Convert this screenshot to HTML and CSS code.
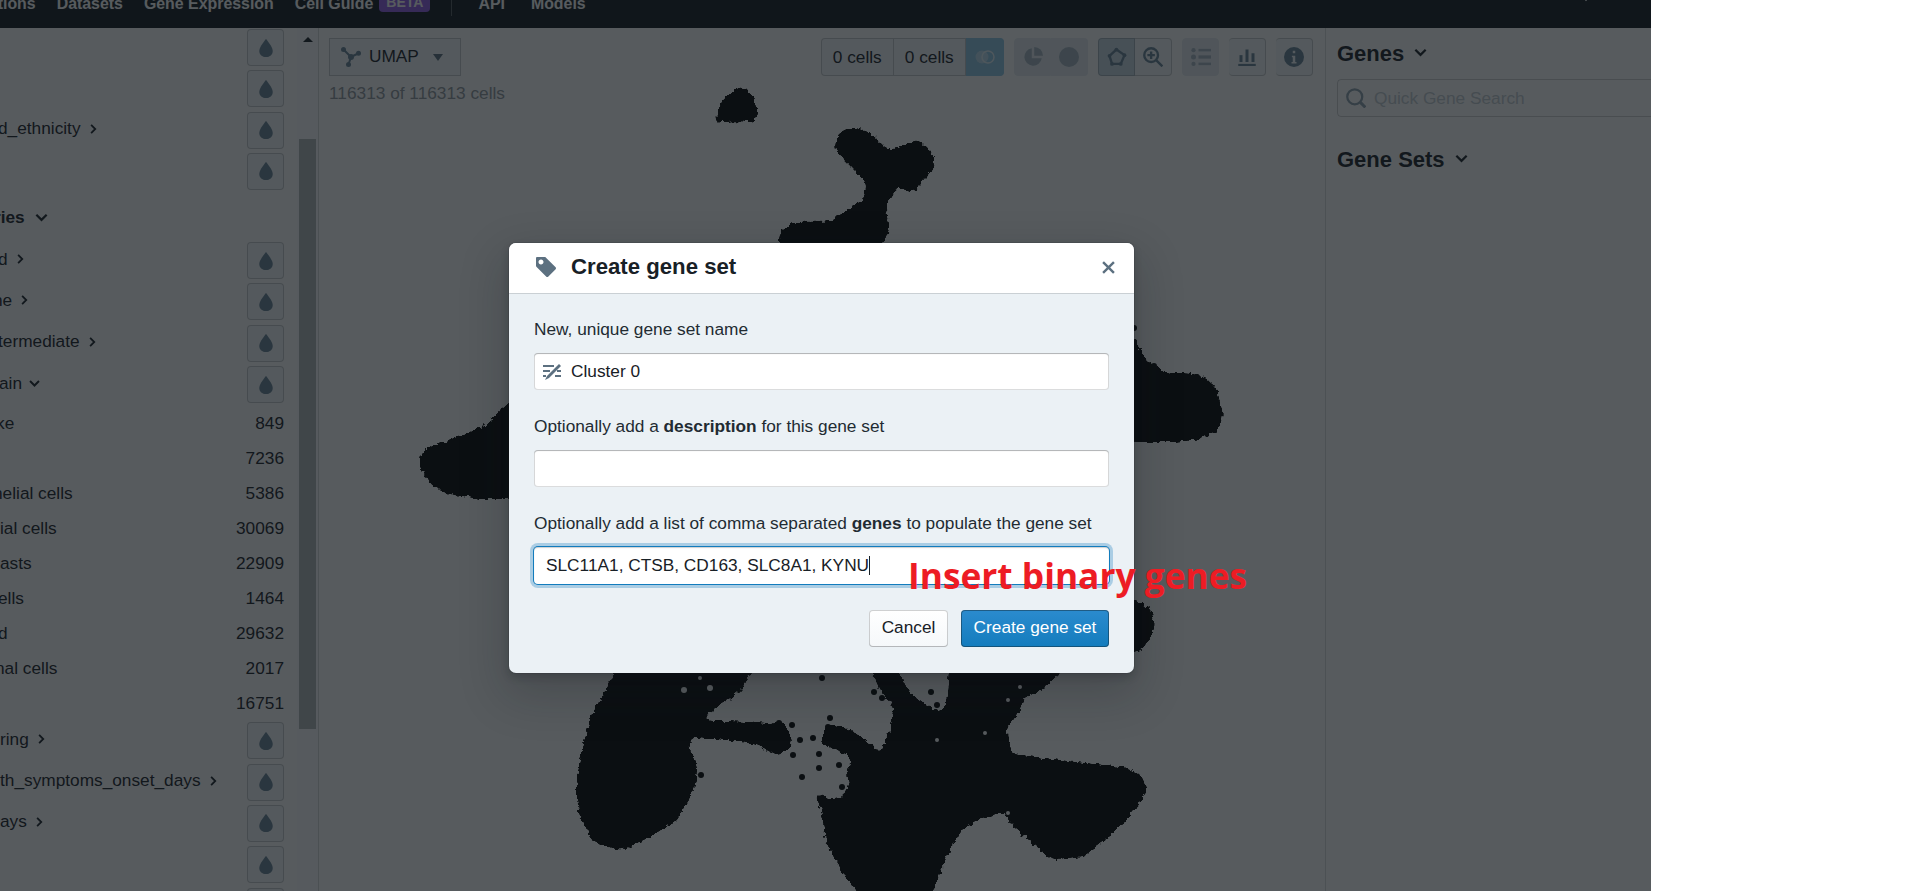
FILE: index.html
```html
<!doctype html>
<html>
<head>
  <title>cellxgene - Create gene set</title>
  <meta charset="utf-8"/>
  <link rel="stylesheet" href="styles.css">
</head>
<body>
  <svg class="Defs" width="0" height="0">
    <symbol id="i-tint" viewBox="0 0 16 16"><path d="M8 0S2 7 2 10.6C2 13.8 4.6 16 8 16s6-2.2 6-5.4C14 7 8 0 8 0z"/></symbol>
    <symbol id="i-right" viewBox="0 0 16 16"><path d="M5.5 2.5 11 8l-5.5 5.5" fill="none" stroke="currentColor" stroke-width="2.4"/></symbol>
    <symbol id="i-down" viewBox="0 0 16 16"><path d="M2.5 5 8 10.5 13.5 5" fill="none" stroke="currentColor" stroke-width="2.4"/></symbol>
  </svg>

  <div class="App">
    <nav class="Nav">
      <span class="Nav__Item Nav__Item--first">Collections</span>
      <span class="Nav__Item">Datasets</span>
      <span class="Nav__Item">Gene Expression</span>
      <span class="Nav__Item Nav__Item--tight">Cell Guide</span>
      <span class="Nav__Badge">BETA</span>
      <span class="Nav__Divider"></span>
      <span class="Nav__Item">API</span>
      <span class="Nav__Item Nav__Item--wide">Models</span>
      <svg class="Nav__Caret"><use href="#i-down"/></svg>
    </nav>

    <div class="Columns">
      <aside class="Side">
        <div class="Row"><button class="Drop"><svg><use href="#i-tint"/></svg></button></div>
        <div class="Row"><button class="Drop"><svg><use href="#i-tint"/></svg></button></div>
        <div class="Row">
          <span class="Name Cut-2">d_ethnicity</span><svg class="Chev"><use href="#i-right"/></svg>
          <button class="Drop"><svg><use href="#i-tint"/></svg></button>
        </div>
        <div class="Row"><button class="Drop"><svg><use href="#i-tint"/></svg></button></div>

        <div class="Heading"><span class="Name Cut-6">ries</span><svg class="Chev Chev--big"><use href="#i-down"/></svg></div>

        <div class="Row">
          <span class="Name Cut-2">d</span><svg class="Chev"><use href="#i-right"/></svg>
          <button class="Drop"><svg><use href="#i-tint"/></svg></button>
        </div>
        <div class="Row">
          <span class="Name Cut-7">ne</span><svg class="Chev"><use href="#i-right"/></svg>
          <button class="Drop"><svg><use href="#i-tint"/></svg></button>
        </div>
        <div class="Row">
          <span class="Name Cut-2">termediate</span><svg class="Chev"><use href="#i-right"/></svg>
          <button class="Drop"><svg><use href="#i-tint"/></svg></button>
        </div>
        <div class="Row">
          <span class="Name Cut-1">ain</span><svg class="Chev Chev--down"><use href="#i-down"/></svg>
          <button class="Drop"><svg><use href="#i-tint"/></svg></button>
        </div>

        <div class="Count"><span class="Name Cut-4">ke</span><span>849</span></div>
        <div class="Count"><span class="Name"></span><span>7236</span></div>
        <div class="Count"><span class="Name Cut-7">helial cells</span><span>5386</span></div>
        <div class="Count"><span class="Name">ial cells</span><span>30069</span></div>
        <div class="Count"><span class="Name">asts</span><span>22909</span></div>
        <div class="Count"><span class="Name Cut-2">ells</span><span>1464</span></div>
        <div class="Count"><span class="Name Cut-2">d</span><span>29632</span></div>
        <div class="Count"><span class="Name Cut-5">nal cells</span><span>2017</span></div>
        <div class="Count"><span class="Name"></span><span>16751</span></div>

        <div class="Row">
          <span class="Name">ring</span><svg class="Chev"><use href="#i-right"/></svg>
          <button class="Drop"><svg><use href="#i-tint"/></svg></button>
        </div>
        <div class="Row">
          <span class="Name">th_symptoms_onset_days</span><svg class="Chev"><use href="#i-right"/></svg>
          <button class="Drop"><svg><use href="#i-tint"/></svg></button>
        </div>
        <div class="Row">
          <span class="Name">ays</span><svg class="Chev"><use href="#i-right"/></svg>
          <button class="Drop"><svg><use href="#i-tint"/></svg></button>
        </div>
        <div class="Row"><button class="Drop"><svg><use href="#i-tint"/></svg></button></div>
        <div class="Row"><button class="Drop"><svg><use href="#i-tint"/></svg></button></div>
      </aside>

      <div class="Scroll">
        <svg class="Scroll__Arrow" viewBox="0 0 10 5"><path d="M5 0l5 5H0z"/></svg>
        <div class="Scroll__Thumb"></div>
      </div>

      <main class="Main">
        <!-- plot uses page coordinates -->
        <svg class="Plot" viewBox="319 28 1006 863">
          <defs>
            <filter id="rough" filterUnits="userSpaceOnUse" x="319" y="28" width="1006" height="900" color-interpolation-filters="sRGB">
              <feGaussianBlur stdDeviation="3.5" result="soft"/>
              <feComponentTransfer in="soft" result="solid">
                <feFuncA type="linear" slope="24" intercept="-8"/>
              </feComponentTransfer>
              <feTurbulence type="fractalNoise" baseFrequency=".2" numOctaves="2" seed="4" result="noise"/>
              <feDisplacementMap in="solid" in2="noise" scale="6" xChannelSelector="R" yChannelSelector="G"/>
            </filter>
          </defs>
          <g class="Plot__Cells">
            <path d="M737 87 744 90 750 95 755 103 756 112 753 122 745 120 730 120 717 122 718 112 724 100 730 96z"/>
            <path d="M853 128 871 135 888 152 905 147 917 140 934 157 931 170 921 180 915 191 905 188 890 187 894 194 885 200 888 230 879 250H779L782 230 796 223 830 223 845 213 865 200 868 183 853 167 836 150 838 135z"/>
            <path d="M422 452 443 443 468 435 490 423 520 395V497L483 498 450 493 433 485 421 467z"/>
            <path d="M1120 325 1134 340 1142 358 1153 367 1167 374 1190 375 1202 377 1215 388 1222 415 1218 428 1200 438 1170 441 1120 440z"/>
            <path d="M1120 598 1134 602 1150 610 1154 625 1147 643 1134 653 1120 656z"/>
            <path d="M621 660 607 690 592 717 583 750 577 787 581 817 595 842 621 849 647 837 675 820 693 790 696 767 687 747 693 733 707 713 739 690 759 660z"/>
            <path d="M693 737 704 722 744 723 773 726 782 720 792 743 779 755 756 743 721 738z"/>
            <path d="M868 660 882 690 895 707 891 733 879 757 871 745 848 730 828 726 820 742 846 752 853 760 848 773 851 787 842 798 828 800 813 792 822 807 828 845 845 873 865 900H928L945 857 960 830 980 817 1006 810 1011 823 1031 840 1052 858 1083 855 1112 833 1135 808 1146 790 1138 773 1112 767 1072 763 1011 755 1008 743 1006 727 1017 713 1023 697 1040 690 1072 660H951L948 700 942 715 920 703 908 693 891 660z"/>
          </g>
          <g class="Plot__Dots">
            <circle cx="1134" cy="328" r="3"/><circle cx="1154" cy="366" r="3"/>
            <circle cx="779" cy="723" r="3"/><circle cx="792" cy="725" r="3"/><circle cx="830" cy="718" r="3"/>
            <circle cx="828" cy="727" r="3"/><circle cx="800" cy="740" r="3"/><circle cx="813" cy="738" r="3"/>
            <circle cx="793" cy="755" r="3"/><circle cx="819" cy="754" r="3"/><circle cx="819" cy="768" r="3"/>
            <circle cx="802" cy="777" r="3"/><circle cx="701" cy="775" r="3"/><circle cx="839" cy="765" r="3"/>
            <circle cx="842" cy="787" r="3"/><circle cx="690" cy="697" r="3"/><circle cx="882" cy="698" r="3"/>
            <circle cx="874" cy="692" r="3"/><circle cx="931" cy="692" r="3"/><circle cx="822" cy="678" r="3"/>
            <circle cx="937" cy="705" r="3"/><circle cx="692" cy="681" r="3"/>
          </g>
          <g class="Plot__Holes">
            <circle cx="684" cy="690" r="3"/><circle cx="710" cy="688" r="3"/><circle cx="700" cy="678" r="2"/>
            <circle cx="985" cy="733" r="2"/><circle cx="1008" cy="700" r="2"/><circle cx="1020" cy="687" r="2"/>
            <circle cx="937" cy="740" r="2"/><circle cx="1008" cy="813" r="2"/>
          </g>
        </svg>

        <div class="Toolbar">
          <div>
            <button class="Btn Btn--umap">
              <svg class="Icon" viewBox="0 0 16 16"><path d="M2 2l6 6 6-3M8 8l-2 6" fill="none" stroke="currentColor" stroke-width="1.6"/><circle cx="2" cy="2" r="2"/><circle cx="14" cy="5" r="2"/><circle cx="6" cy="14" r="2"/><circle cx="8" cy="8" r="2.4"/></svg>
              <span class="Btn__Text">UMAP</span>
              <svg class="Caret" viewBox="0 0 10 7"><path d="M0 0h10L5 7z"/></svg>
            </button>
            <div class="Total">116313 of 116313 cells</div>
          </div>
          <div class="Tools">
            <div class="Group">
              <button class="Btn Btn--cells">0 cells</button>
              <button class="Btn Btn--cells">0 cells</button>
              <button class="Btn Btn--venn">
                <svg class="Icon" viewBox="0 0 20 16"><circle cx="7" cy="8" r="6.500" class="Venn__Left"/><circle cx="13" cy="8" r="6" fill="none" stroke="currentColor" stroke-width="1.500"/></svg>
              </button>
            </div>
            <div class="Group">
              <button class="Btn Btn--off">
                <svg class="Icon" viewBox="0 0 16 16"><path d="M7 1v8h8A7 7 0 1 1 7 1z"/><path d="M9 0v7h7a7 7 0 0 0-7-7z"/></svg>
              </button>
              <button class="Btn Btn--off">
                <svg class="Icon" viewBox="0 0 16 16"><circle cx="8" cy="8" r="8"/></svg>
              </button>
            </div>
            <div class="Group">
              <button class="Btn Btn--on">
                <svg class="Icon" viewBox="0 0 16 16"><path d="M7.5 2 14 6.500 11 13.500H4L2 7z" fill="none" stroke="currentColor" stroke-width="1.9"/><circle cx="7.500" cy="2" r="1.500"/><circle cx="14" cy="6.500" r="1.500"/><circle cx="11" cy="13.500" r="1.500"/><circle cx="4" cy="13.500" r="1.500"/><circle cx="2" cy="7" r="1.500"/></svg>
              </button>
              <button class="Btn">
                <svg class="Icon" viewBox="0 0 16 16"><circle cx="6.500" cy="6.500" r="5.500" fill="none" stroke="currentColor" stroke-width="1.900"/><path d="M6.500 3.500v6M3.500 6.500h6M10.500 10.500l5 5" fill="none" stroke="currentColor" stroke-width="1.900"/></svg>
              </button>
            </div>
            <button class="Btn Btn--off Btn--solo">
              <svg class="Icon" viewBox="0 0 16 16"><circle cx="2" cy="2.500" r="1.700"/><circle cx="2" cy="8" r="2"/><circle cx="2" cy="13.500" r="1.700"/><rect x="6" y="1.500" width="10" height="2"/><rect x="6" y="6.700" width="10" height="2.600"/><rect x="6" y="12.500" width="10" height="2"/></svg>
            </button>
            <button class="Btn Btn--solo">
              <svg class="Icon" viewBox="0 0 16 16"><rect x="2" y="6.500" width="2.400" height="5.500"/><rect x="6.800" y="2" width="2.400" height="10"/><rect x="11.600" y="5" width="2.400" height="7"/><rect x="1" y="13.500" width="14" height="1.700"/></svg>
            </button>
            <button class="Btn Btn--solo">
              <svg class="Icon" viewBox="0 0 16 16"><path fill-rule="evenodd" d="M8 0a8 8 0 1 0 0 16A8 8 0 0 0 8 0zM7 3h2v2H7zM6.300 7H9v5h1v1.200H6V12h1V8.200h-.7z"/></svg>
            </button>
          </div>
        </div>
      </main>

      <aside class="Genes">
        <h3 class="Genes__Title">Genes<svg class="Chev Chev--big"><use href="#i-down"/></svg></h3>
        <div class="Search">
          <svg class="Search__Icon" viewBox="0 0 16 16"><circle cx="7" cy="7" r="6" fill="none" stroke="currentColor" stroke-width="1.800"/><path d="M11.500 11.500 15.500 15.500" fill="none" stroke="currentColor" stroke-width="2.400"/></svg>
          <span>Quick Gene Search</span>
        </div>
        <h3 class="Genes__Title Genes__Title--sets">Gene Sets<svg class="Chev Chev--big"><use href="#i-down"/></svg></h3>
      </aside>
    </div>

    <div class="Overlay"></div>

    <div class="Dialog">
      <div class="Dialog__Header">
        <svg class="Dialog__Tag" viewBox="0 0 16 16"><path fill-rule="evenodd" d="M15.700 8.200 7.800.3C7.600.1 7.300 0 7 0H1C.4 0 0 .4 0 1v6c0 .3.100.5.300.7l8 8c.2.2.4.3.7.3.3 0 .5-.1.7-.3l6-6c.2-.2.300-.4.300-.7 0-.3-.1-.6-.3-.8zM4 6C2.900 6 2 5.100 2 4s.9-2 2-2 2 .9 2 2-.9 2-2 2z"/></svg>
        <h4 class="Dialog__Title">Create gene set</h4>
        <svg class="Dialog__Close" viewBox="0 0 12 12"><path d="M1 1l10 10M11 1 1 11" fill="none" stroke="currentColor" stroke-width="2.200"/></svg>
      </div>
      <div class="Dialog__Body">
        <label class="Field__Label">New, unique gene set name</label>
        <div class="Field__Input">
          <svg class="Field__Icon" viewBox="0 0 20 18"><path d="M1 3h11M1 8h7M1 13h3M13 13h6M15 8h4" fill="none" stroke="currentColor" stroke-width="1.800"/><path d="M17 1 5 13 3 17l4-2L19 3z"/></svg>
          <span>Cluster 0</span>
        </div>
        <label class="Field__Label Field__Label--next">Optionally add a <b>description</b> for this gene set</label>
        <div class="Field__Input"></div>
        <label class="Field__Label Field__Label--next">Optionally add a list of comma separated <b>genes</b> to populate the gene set</label>
        <div class="Field__Input Field__Input--focus"><span>SLC11A1, CTSB, CD163, SLC8A1, KYNU</span><i class="Cursor"></i></div>
        <div class="Dialog__Footer">
          <button class="Cancel">Cancel</button>
          <button class="Create">Create gene set</button>
        </div>
      </div>
    </div>

    <div class="Note">Insert binary genes</div>
  </div>
</body>
</html>
```

FILE: styles.css
```css
* {
  box-sizing: border-box;
}

body {
  background-color: #fff;
  color: #182026;
  font-family: "Liberation Sans", Arial, sans-serif;
  font-size: 17.28px;
  margin: 0;
}

button {
  font-family: inherit;
  font-size: inherit;
}

.Defs {
  position: absolute;
}

.App {
  display: flex;
  flex-direction: column;
  height: 891px;
  overflow: hidden;
  position: relative;
  width: 1651px;
}

.Nav {
  align-items: flex-start;
  background-color: #111820;
  color: #fff;
  display: flex;
  flex: none;
  font-size: 15.9px;
  font-weight: bold;
  gap: 21px;
  height: 28px;
  overflow: hidden;
}
.Nav__Item {
  line-height: 20px;
  margin-top: -6px;
  white-space: nowrap;
}
.Nav__Item--first {
  margin-left: -50px;
}
.Nav__Item--tight {
  margin-right: -15px;
}
.Nav__Item--wide {
  margin-left: 5px;
}
.Nav__Badge {
  background-color: #8f5ae8;
  border-radius: 4px;
  font-size: 14px;
  height: 20px;
  line-height: 20px;
  margin-top: -8px;
  padding: 0 7px;
}
.Nav__Divider {
  background-color: #545a60;
  height: 16px;
  margin-right: 5px;
  width: 1px;
}
.Nav__Caret {
  color: #fff;
  height: 12px;
  margin: -8px 59px 0 auto;
  width: 12px;
}

.Columns {
  display: flex;
  flex: 1;
  min-height: 0;
}

.Side {
  flex: none;
  overflow: hidden;
  padding: 1px 13px 0 0;
  width: 297px;
}

.Row {
  align-items: center;
  display: flex;
  height: 37px;
  margin-bottom: 4.3px;
}
.Name {
  padding-bottom: 3px;
  white-space: nowrap;
}
.Cut-1 {
  margin-left: -1px;
}
.Cut-2 {
  margin-left: -2px;
}
.Cut-4 {
  margin-left: -4px;
}
.Cut-5 {
  margin-left: -5px;
}
.Cut-6 {
  margin-left: -6px;
}
.Cut-7 {
  margin-left: -7px;
}
.Chev {
  flex: none;
  height: 12px;
  margin-bottom: 3px;
  margin-left: 6px;
  width: 12px;
}
.Chev--down {
  height: 13px;
  margin-left: 6px;
  width: 13px;
}
.Chev--big {
  height: 15px;
  margin-left: 9px;
  width: 15px;
}
.Drop {
  align-items: center;
  background-color: #f5f8fa;
  border: 1px solid rgba(16, 22, 26, .2);
  border-radius: 4px;
  display: flex;
  flex: none;
  height: 37px;
  justify-content: center;
  margin-left: auto;
  padding: 0;
  width: 37px;
}
.Drop svg {
  fill: #688498;
  height: 18px;
  width: 18px;
}

.Heading {
  align-items: center;
  display: flex;
  font-weight: bold;
  height: 48px;
  padding-top: 2px;
}

.Count {
  align-items: center;
  display: flex;
  height: 35px;
  justify-content: space-between;
}
.Count .Name {
  padding: 0 0 2px;
}
.Count span:last-child {
  margin-top: -3px;
}

.Scroll {
  background-color: #fbfcfd;
  border-right: 1px solid rgba(16, 22, 26, .15);
  flex: none;
  padding: 9px 0 0 2px;
  width: 22px;
}
.Scroll__Arrow {
  display: block;
  fill: #182026;
  height: 5px;
  margin-left: 4px;
  width: 10px;
}
.Scroll__Thumb {
  background-color: #b2b7ba;
  height: 590px;
  margin-top: 97px;
  width: 17px;
}

.Main {
  flex: none;
  position: relative;
  width: 1006px;
}
.Plot {
  height: 863px;
  left: 0;
  position: absolute;
  top: 0;
  width: 1006px;
}
.Plot__Cells {
  filter: url(#rough);
}
.Plot__Cells path {
  fill: #000;
}
.Plot__Dots circle {
  fill: #000;
}
.Plot__Holes circle {
  fill: #fff;
}

.Toolbar {
  display: flex;
  justify-content: space-between;
  padding: 10px 12px 0 10px;
  position: relative;
}
.Tools {
  display: flex;
  gap: 10px;
}
.Group {
  display: flex;
}

.Btn {
  align-items: center;
  background-color: #f5f8fa;
  border: 1px solid rgba(16, 22, 26, .2);
  border-radius: 0;
  color: #182026;
  display: flex;
  height: 38px;
  justify-content: center;
  padding: 0;
  width: 37px;
}
.Btn + .Btn {
  border-left: 0;
}
.Group .Btn:first-child {
  border-radius: 4px 0 0 4px;
}
.Group .Btn:last-child {
  border-radius: 0 4px 4px 0;
}
.Btn--solo {
  border-radius: 4px;
}
.Btn__Text {
  padding-bottom: 2px;
}
.Icon {
  fill: currentColor;
  flex: none;
  height: 20px;
  width: 20px;
}
.Btn .Icon {
  color: #688498;
}
.Btn--cells {
  width: 72.5px;
}
.Btn--venn {
  background-color: #8fc8e6;
  border-color: #8fc8e6;
  width: 38px;
}
.Btn--venn .Icon {
  color: #e2f1f9;
}
.Venn__Left {
  opacity: .55;
}
.Btn--off {
  background-color: #e6ecf0;
  border-color: #e6ecf0;
}
.Btn--off .Icon {
  color: #a7b6c2;
}
.Btn--on {
  background-color: #c8dae5;
}
.Btn--umap {
  gap: 8px;
  justify-content: flex-start;
  padding-left: 11px;
  width: 132px;
}
.Caret {
  fill: #5c7080;
  height: 7px;
  margin-left: 6px;
  width: 10px;
}
.Total {
  color: #8f979d;
  line-height: 20px;
  margin-top: 7px;
}

.Genes {
  border-left: 1px solid rgba(16, 22, 26, .15);
  flex: 1;
  overflow: hidden;
  padding: 13px 0 0 11px;
}
.Genes__Title {
  align-items: center;
  display: flex;
  font-size: 22px;
  height: 26px;
  margin: 0 0 12px;
}
.Genes__Title--sets {
  margin-top: 30px;
}
.Search {
  align-items: center;
  border: 1px solid rgba(16, 22, 26, .2);
  border-radius: 4px;
  color: #c4ccd2;
  display: flex;
  gap: 8px;
  height: 38px;
  padding-left: 8px;
  width: 400px;
}
.Search__Icon {
  color: #8ea0ae;
  height: 20px;
  width: 20px;
}

.Overlay {
  background-color: rgba(16, 22, 26, .7);
  bottom: 0;
  left: 0;
  position: absolute;
  right: 0;
  top: 0;
}

.Dialog {
  background-color: #ebf1f5;
  border-radius: 7px;
  box-shadow: 0 0 0 1px rgba(16, 22, 26, .1), 0 4px 8px rgba(16, 22, 26, .2), 0 18px 46px 6px rgba(16, 22, 26, .2);
  left: 509px;
  position: absolute;
  top: 243px;
  width: 625px;
}
.Dialog__Header {
  align-items: center;
  background-color: #fff;
  border-radius: 7px 7px 0 0;
  box-shadow: 0 1px 0 rgba(16, 22, 26, .15);
  display: flex;
  height: 50px;
  padding: 0 19px 2px 27px;
}
.Dialog__Tag {
  fill: #5c7080;
  height: 20px;
  margin-right: 15px;
  width: 20px;
}
.Dialog__Title {
  font-size: 22.2px;
  margin: 0;
}
.Dialog__Close {
  color: #5c7080;
  height: 13px;
  margin-left: auto;
  width: 13px;
}
.Dialog__Body {
  padding: 26px 25px 26px;
}
.Field__Label {
  color: #222b32;
  display: block;
  line-height: 20px;
  margin-bottom: 14px;
}
.Field__Label--next {
  margin-bottom: 14px;
  margin-top: 26px;
}
.Field__Input {
  align-items: center;
  background-color: #fff;
  border-radius: 4px;
  box-shadow: inset 0 0 0 1px rgba(16, 22, 26, .15), inset 0 1px 1px rgba(16, 22, 26, .2);
  display: flex;
  height: 37px;
  padding: 0 12px 0 8px;
}
.Field__Icon {
  color: #5c7080;
  fill: #5c7080;
  height: 18px;
  margin-right: 9px;
  width: 20px;
}
.Field__Input--focus {
  box-shadow: 0 0 0 1px #137cbd, 0 0 0 4px rgba(19, 124, 189, .3), inset 0 1px 1px rgba(16, 22, 26, .2);
  padding-left: 12px;
}
.Cursor {
  background-color: #182026;
  height: 19px;
  width: 1px;
}
.Dialog__Footer {
  display: flex;
  gap: 13px;
  justify-content: flex-end;
  margin-top: 26px;
}
.Cancel {
  background: linear-gradient(#fff, #f5f8fa);
  border: 0;
  border-radius: 4px;
  box-shadow: inset 0 0 0 1px rgba(16, 22, 26, .2), inset 0 -1px 0 rgba(16, 22, 26, .1);
  color: #182026;
  height: 37px;
  padding: 0 0 2px;
  width: 79px;
}
.Create {
  background: linear-gradient(#2b8bce, #137cbd);
  border: 0;
  border-radius: 4px;
  box-shadow: inset 0 0 0 1px rgba(16, 22, 26, .4);
  color: #fff;
  height: 37px;
  padding: 0 0 2px;
  width: 148px;
}

.Note {
  color: #ed1c24;
  font-family: "Open Sans", sans-serif;
  font-size: 35.3px;
  font-weight: bold;
  left: 908px;
  line-height: 40px;
  position: absolute;
  top: 555px;
  white-space: nowrap;
}
```
